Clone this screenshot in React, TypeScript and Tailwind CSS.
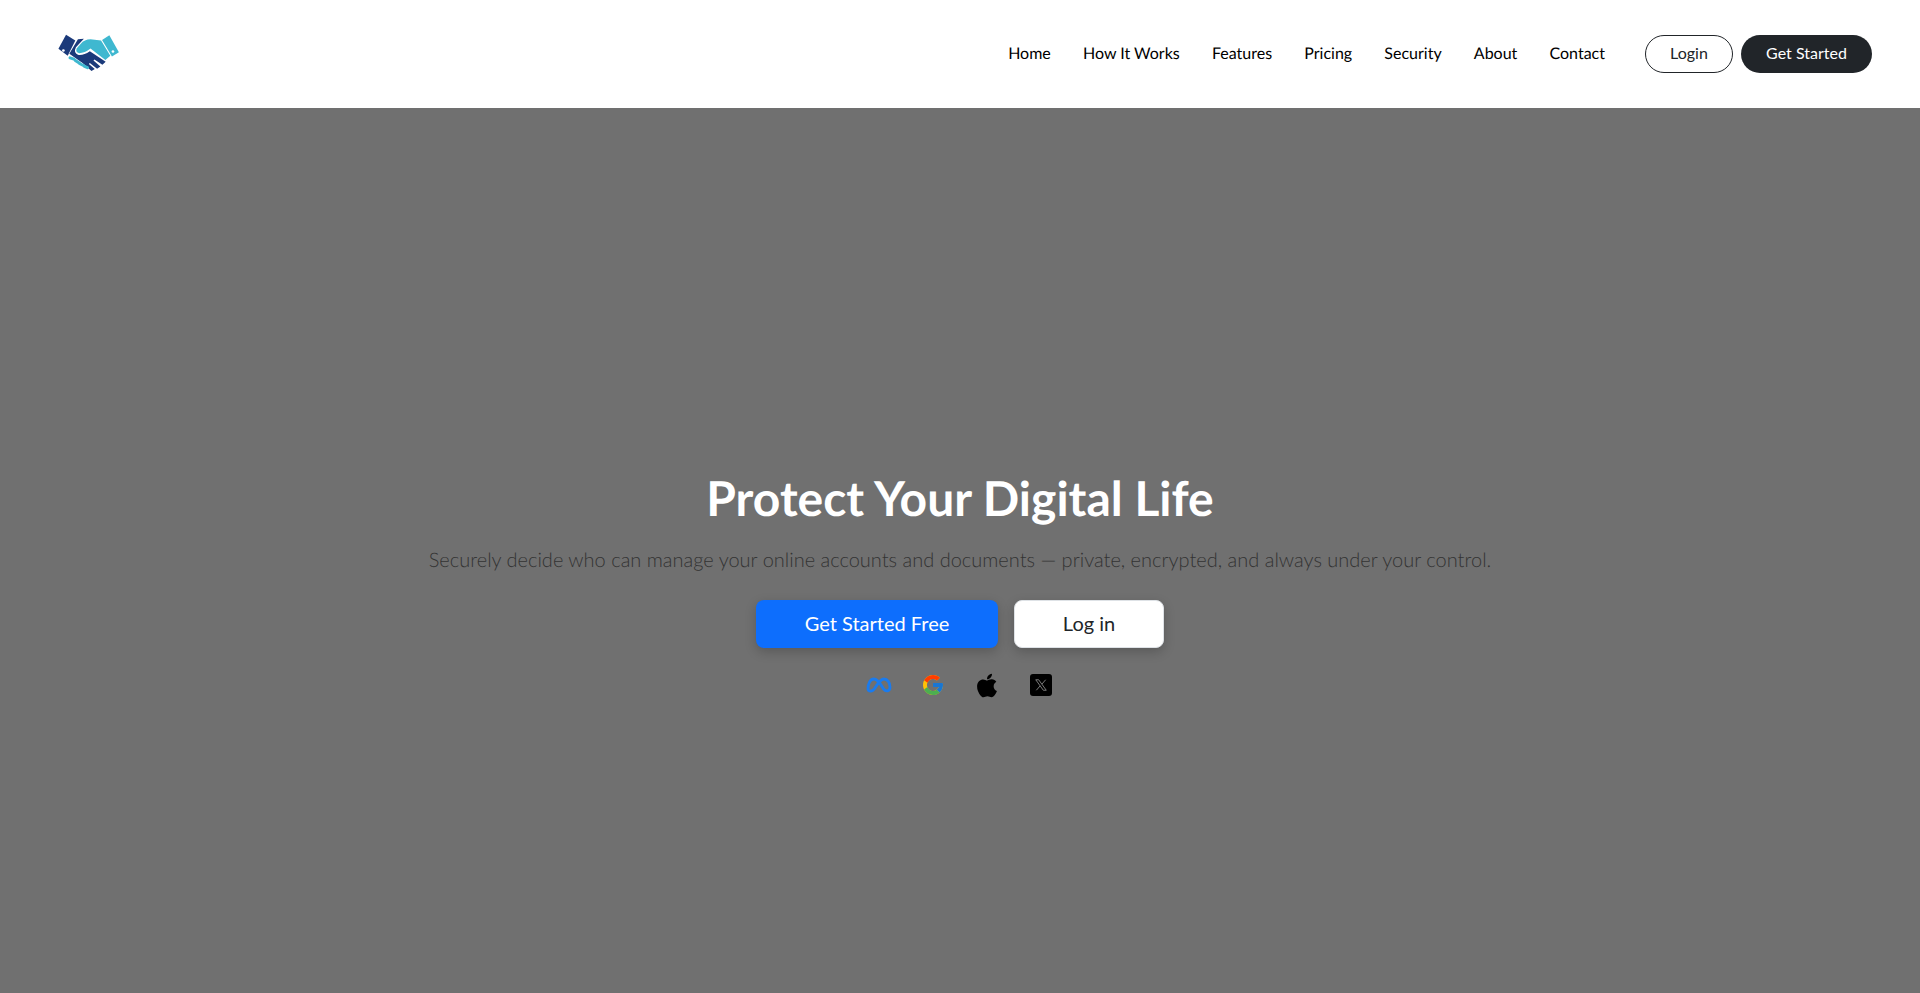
import { FaApple } from "react-icons/fa";
import { FcGoogle } from "react-icons/fc";

const Logo = () => (
  <svg width="62" height="37" viewBox="55 40 185 112" className="block mb-1">
    <path d="M78 42 L106 60 L83 106 L55 85 Z" fill="#1b3a7a" />
    <circle cx="70" cy="90" r="4" fill="#fff" />
    <path d="M187 58 L209 44 L238 95 L217 108 Z" fill="#3fb8d0" />
    <circle cx="220" cy="93" r="4" fill="#fff" />
    <path d="M114 56 L132 54 L108 80 Q100 96 114 103 Q130 106 150 92 L198 124 L188 133 L164 117 L161 120 L182 138 L172 145 L150 128 L147 131 L165 146 L155 152 L128 128 L88 100 Z" fill="#1b3a7a" />
    <path d="M122 70 Q134 56 152 56 L184 60 L212 106 L197 119 L152 84 Q134 98 118 98 Q106 96 110 84 Z" fill="#3fb8d0" />
    <g stroke="#3fb8d0" strokeWidth="9" strokeLinecap="round">
      <path d="M90 112 L102 116" />
      <path d="M106 120 L118 128" />
      <path d="M120 130 L132 136" />
      <path d="M134 138 L143 142" />
    </g>
  </svg>
);

const Meta = () => (
  <svg width="28" height="18" viewBox="0 0 27 18" fill="none" className="shrink-0">
    <path d="M2.500 13 C2.500 7 5 3 8.500 3 C12.500 3 15.500 9 18 13 C20.500 16 24.500 15.500 24.500 11 C24.500 6.500 22 3 18.500 3 C15 3 12 8 9.500 12 C7 16 2.500 16 2.500 13 Z" stroke="#1a7bee" strokeWidth="2.800" strokeLinecap="round" strokeLinejoin="round" />
  </svg>
);

const X = () => (
  <div className="w-[22px] h-[22px] rounded-[3px] bg-black flex items-center justify-center">
    <svg width="14" height="14" viewBox="0 0 24 24" fill="none" stroke="#8a8a8a" strokeWidth="1.500">
      <path d="M3 3 L8 3 L21 21 L16 21 Z" />
      <path d="M20 3 L13.500 10.500 M10.500 13.500 L4 21" />
    </svg>
  </div>
);

const links = ["Home", "How It Works", "Features", "Pricing", "Security", "About", "Contact"];

export default function App() {
  return (
    <div className="h-[993px] flex flex-col font-['Lato','Liberation_Sans',sans-serif] overflow-hidden [text-rendering:geometricPrecision]">
      <header className="h-[108px] shrink-0 bg-white flex items-center pl-[58px] pr-[48px]">
        <Logo />
        <nav className="ml-auto flex items-center gap-[32.2px] mr-10">
          {links.map((l) => (
            <a key={l} className="text-base text-black leading-6">{l}</a>
          ))}
        </nav>
        <div className="flex items-center gap-2">
          <button className="w-[88px] h-[38px] rounded-full border border-[#212529] bg-white text-[#212529] text-base pb-0.5">Login</button>
          <button className="w-[131px] h-[38px] rounded-full bg-[#212529] text-white text-base pb-0.5">Get Started</button>
        </div>
      </header>
      <main className="flex-1 bg-[#707070] flex flex-col items-center pt-[362px]">
        <h1 className="text-5xl leading-[58px] font-bold text-white">Protect Your Digital Life</h1>
        <p className="mt-[17px] text-xl font-light leading-[30px] text-[#333]">
          Securely decide who can manage your online accounts and documents — private, encrypted, and always under your control.
        </p>
        <div className="mt-[25px] flex gap-4">
          <button className="w-[242px] h-12 rounded-lg bg-[#0d6efd] text-white text-xl pb-0.5 shadow-[0_4px_12px_rgba(0,0,0,0.2)]">Get Started Free</button>
          <button className="w-[150px] h-12 rounded-lg bg-white text-[#212529] text-xl pb-0.5 border border-[#dee2e6] shadow-[0_4px_12px_rgba(0,0,0,0.2)]">Log in</button>
        </div>
        <div className="mt-[25px] flex items-center gap-[30px] h-6">
          <div className="w-6 flex justify-center"><Meta /></div>
          <div className="w-6 flex justify-center"><FcGoogle size={24} /></div>
          <div className="w-6 flex justify-center"><FaApple size={27} color="#000" /></div>
          <div className="w-6 flex justify-center"><X /></div>
        </div>
      </main>
    </div>
  );
}
